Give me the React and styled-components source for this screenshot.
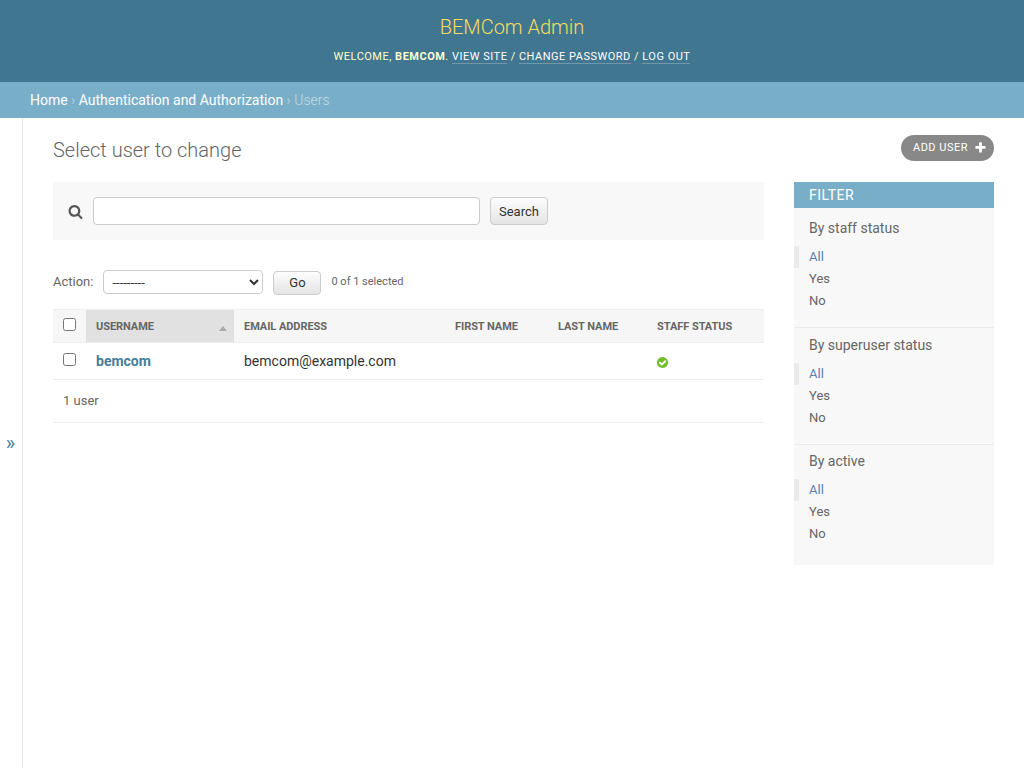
import React from "react";
import styled, { createGlobalStyle } from "styled-components";

const Global = createGlobalStyle`
  html, body { margin: 0; padding: 0; height: 100%; }
  body { font-family: Roboto, "Lucida Grande", Verdana, Arial, sans-serif; font-size: 14px; color: #333; background: #fff; }
  #root { min-height: 768px; display: flex; flex-direction: column; }
  * { box-sizing: border-box; }
`;

const Page = styled.div`display: flex; flex-direction: column; height: 768px; overflow: hidden;`;
const Header = styled.header`
  height: 82px; padding: 15px 30px 0; background: #417690; color: #ffc;
  display: flex; flex-direction: column; align-items: center;
`;
const Brand = styled.h1`margin: 0 0 8px; font-size: 20px; line-height: 24px; font-weight: 300; color: #f5dd5d;`;
const UserTools = styled.div`font-size: 11px; line-height: 20px; letter-spacing: 0.5px; text-transform: uppercase; white-space: nowrap;`;
const ToolLink = styled.a`color: #fff; border-bottom: 1px solid rgba(255,255,255,0.25); text-decoration: none;`;
const Crumbs = styled.nav`height: 36px; padding: 0 30px; background: #79aec8; color: #c4dce8; font-size: 14px; font-weight: 300; line-height: 36px;`;
const CrumbLink = styled.a`color: #fff; font-weight: 400; text-decoration: none;`;
const Body = styled.div`flex: 1; display: flex; min-height: 0;`;
const Toggle = styled.div`
  width: 23px; flex: none; border-right: 1px solid #eaeaea; color: #447e9b; font-size: 20px;
  display: flex; align-items: center; justify-content: center; padding: 0 1px 0 0;
`;
const Main = styled.main`flex: 1; min-width: 0; padding: 20px 30px 0;`;
const TitleRow = styled.div`display: flex; justify-content: space-between; align-items: flex-start; height: 44px;`;
const Title = styled.h1`margin: 0; font-size: 20px; line-height: 24px; font-weight: 300; color: #666;`;
const AddButton = styled.a`
  display: flex; align-items: center; gap: 6px; height: 26px; margin-top: -3px; padding: 0 7px 2px 12px; border-radius: 15px;
  background: #888; color: #fff; font-size: 11px; letter-spacing: 0.5px; text-transform: uppercase; text-decoration: none;
`;
const Columns = styled.div`display: flex; gap: 30px; align-items: flex-start;`;
const Left = styled.div`flex: 1; min-width: 0;`;
const SearchBar = styled.form`
  height: 58px; background: #f8f8f8; display: flex; align-items: center; padding: 0 15px; margin-bottom: 30px; color: #666;
`;
const SearchInput = styled.input`
  width: 387px; height: 28px; margin: 0 10px; border: 1px solid #ccc; border-radius: 4px; background: #fff; padding: 2px 5px;
`;
const Btn = styled.button`
  height: 28px; border: 1px solid #ccc; border-radius: 4px; background: linear-gradient(#fdfdfd, #e4e4e4); color: #333;
  font-family: Roboto, sans-serif; font-size: 13px; padding: 0 8px;
`;
const Actions = styled.div`display: flex; align-items: center; height: 24px; margin-bottom: 15px; font-size: 13px; color: #666;`;
const ActionLabel = styled.span`margin-top: -2px;`;
const ActionSelect = styled.select`
  width: 160px; height: 24px; margin: 0 10px; border: 1px solid #ccc; border-radius: 4px; background: #fff; padding: 0 4px; color: #333;
  font-family: Roboto, sans-serif; font-size: 13px;
`;
const GoBtn = styled(Btn)`width: 48px; height: 24px; padding: 0; margin-top: 1px; font-size: 13px;`;
const Counter = styled.span`margin-left: 10px; margin-top: -2px; font-size: 11px; color: #666;`;
const Table = styled.table`width: 711px; table-layout: fixed; border-collapse: collapse; border-top: 1px solid #eee;`;
const Th = styled.th`
  height: 33px; padding: 0 10px; background: ${p => (p.$sorted ? "#e1e1e1" : "#f6f6f6")}; border-bottom: 1px solid #eee;
  position: relative; text-align: left; font-size: 11px; font-weight: 700; letter-spacing: -0.05px; color: #666; text-transform: uppercase; white-space: nowrap;
`;
const Td = styled.td`
  height: 37px; padding: 0 10px; border-bottom: 1px solid #eee; font-size: 14px; color: #333;
`;
const BoxCell = styled.span`display: flex; align-items: center; height: 14px; margin-top: -3px;`;
const Check = styled.input`width: 13px; height: 13px; margin: 0; accent-color: #417690;`;
const UserLink = styled.a`color: #447e9b; font-weight: 700; text-decoration: none;`;
const YesMark = styled.svg`display: block; margin: 3px 0 0 -1px;`;
const SortMark = styled.span`
  position: absolute; right: 7px; top: 16px; width: 0; height: 0;
  border-left: 4.5px solid transparent; border-right: 4.5px solid transparent; border-bottom: 5px solid #aaa;
`;
const Paginator = styled.div`height: 43px; line-height: 41px; padding-left: 10px; border-bottom: 1px solid #eee; font-size: 13px; color: #666;`;
const Filter = styled.aside`width: 200px; flex: none; background: #f8f8f8;`;
const FilterHead = styled.h2`
  margin: 0; height: 26px; line-height: 26px; padding: 0 15px; background: #79aec8; color: #fff; font-size: 14px; font-weight: 400; letter-spacing: 0.5px; text-transform: uppercase;
`;
const Group = styled.section`
  height: ${p => p.$h}px; padding-top: ${p => p.$top}px; border-bottom: ${p => (p.$last ? "none" : "1px solid #eaeaea")};
`;
const GroupTitle = styled.h3`margin: 0 0 8px 15px; font-size: 14px; line-height: 20px; font-weight: 400; color: #666;`;
const Options = styled.ul`list-style: none; margin: 0; padding: 0;`;
const Option = styled.li`
  height: 22px; line-height: 22px; padding-left: ${p => (p.$on ? 10 : 15)}px; font-size: 13px;
  border-left: ${p => (p.$on ? "5px solid #eaeaea" : "none")}; color: ${p => (p.$on ? "#5b80b2" : "#666")};
`;

const SearchIcon = () => (
  <svg width="15" height="15" viewBox="0 0 1792 1792" fill="#555" aria-hidden="true">
    <path d="M1216 832q0-185-131.500-316.500t-316.500-131.500-316.500 131.500-131.500 316.500 131.500 316.500 316.500 131.500 316.500-131.500 131.500-316.500zm512 832q0 52-38 90t-90 38q-54 0-90-38l-343-342q-179 124-399 124-143 0-273.500-55.500t-225-150-150-225-55.500-273.500 55.500-273.500 150-225 225-150 273.500-55.500 273.500 55.500 225 150 150 225 55.500 273.500q0 220-124 399l343 343q37 37 37 90z" />
  </svg>
);
const PlusIcon = () => (
  <svg width="13" height="13" viewBox="0 0 1792 1792" fill="#fff" aria-hidden="true">
    <path d="M1600 796v192q0 40-28 68t-68 28h-416v416q0 40-28 68t-68 28h-192q-40 0-68-28t-28-68v-416h-416q-40 0-68-28t-28-68v-192q0-40 28-68t68-28h416v-416q0-40 28-68t68-28h192q40 0 68 28t28 68v416h416q40 0 68 28t28 68z" />
  </svg>
);
const YesIcon = () => (
  <YesMark width="13" height="13" viewBox="0 0 1792 1792" fill="#70bf2b" aria-hidden="true">
    <path d="M1412 734q0-28-18-46l-91-90q-19-19-45-19t-45 19l-408 407-226-226q-19-19-45-19t-45 19l-91 90q-18 18-18 46 0 27 18 45l362 362q19 19 45 19 27 0 46-19l543-543q18-18 18-45zm252 162q0 209-103 385.500t-279.500 279.500-385.500 103-385.500-103-279.500-279.500-103-385.500 103-385.500 279.500-279.500 385.500-103 385.500 103 279.500 279.500 103 385.500z" />
  </YesMark>
);

const groups = [
  { title: "By staff status", h: 120, top: 10 },
  { title: "By superuser status", h: 117, top: 7 },
  { title: "By active", h: 120, top: 6, last: true },
];

export default function App() {
  return (
    <Page>
      <Global />
      <Header>
        <Brand>BEMCom Admin</Brand>
        <UserTools>
          Welcome, <strong>bemcom</strong>. <ToolLink>View site</ToolLink> / <ToolLink>Change password</ToolLink> / <ToolLink>Log out</ToolLink>
        </UserTools>
      </Header>
      <Crumbs>
        <CrumbLink>Home</CrumbLink> › <CrumbLink>Authentication and Authorization</CrumbLink> › Users
      </Crumbs>
      <Body>
        <Toggle>»</Toggle>
        <Main>
          <TitleRow>
            <Title>Select user to change</Title>
            <AddButton>Add user <PlusIcon /></AddButton>
          </TitleRow>
          <Columns>
            <Left>
              <SearchBar>
                <SearchIcon />
                <SearchInput type="text" />
                <Btn type="button">Search</Btn>
              </SearchBar>
              <Actions>
                <ActionLabel>Action:</ActionLabel>
                <ActionSelect><option>---------</option></ActionSelect>
                <GoBtn type="button">Go</GoBtn>
                <Counter>0 of 1 selected</Counter>
              </Actions>
              <Table>
                <colgroup>
                  <col style={{ width: 33 }} />
                  <col style={{ width: 148 }} />
                  <col style={{ width: 211 }} />
                  <col style={{ width: 103 }} />
                  <col style={{ width: 99 }} />
                  <col style={{ width: 117 }} />
                </colgroup>
                <thead>
                  <tr>
                    <Th><BoxCell><Check type="checkbox" /></BoxCell></Th>
                    <Th $sorted>Username<SortMark /></Th>
                    <Th>Email address</Th>
                    <Th>First name</Th>
                    <Th>Last name</Th>
                    <Th>Staff status</Th>
                  </tr>
                </thead>
                <tbody>
                  <tr>
                    <Td><BoxCell><Check type="checkbox" /></BoxCell></Td>
                    <Td><UserLink>bemcom</UserLink></Td>
                    <Td>bemcom@example.com</Td>
                    <Td />
                    <Td />
                    <Td><YesIcon /></Td>
                  </tr>
                </tbody>
              </Table>
              <Paginator>1 user</Paginator>
            </Left>
            <Filter>
              <FilterHead>Filter</FilterHead>
              {groups.map(g => (
                <Group key={g.title} $h={g.h} $top={g.top} $last={g.last}>
                  <GroupTitle>{g.title}</GroupTitle>
                  <Options>
                    <Option $on>All</Option>
                    <Option>Yes</Option>
                    <Option>No</Option>
                  </Options>
                </Group>
              ))}
            </Filter>
          </Columns>
        </Main>
      </Body>
    </Page>
  );
}
